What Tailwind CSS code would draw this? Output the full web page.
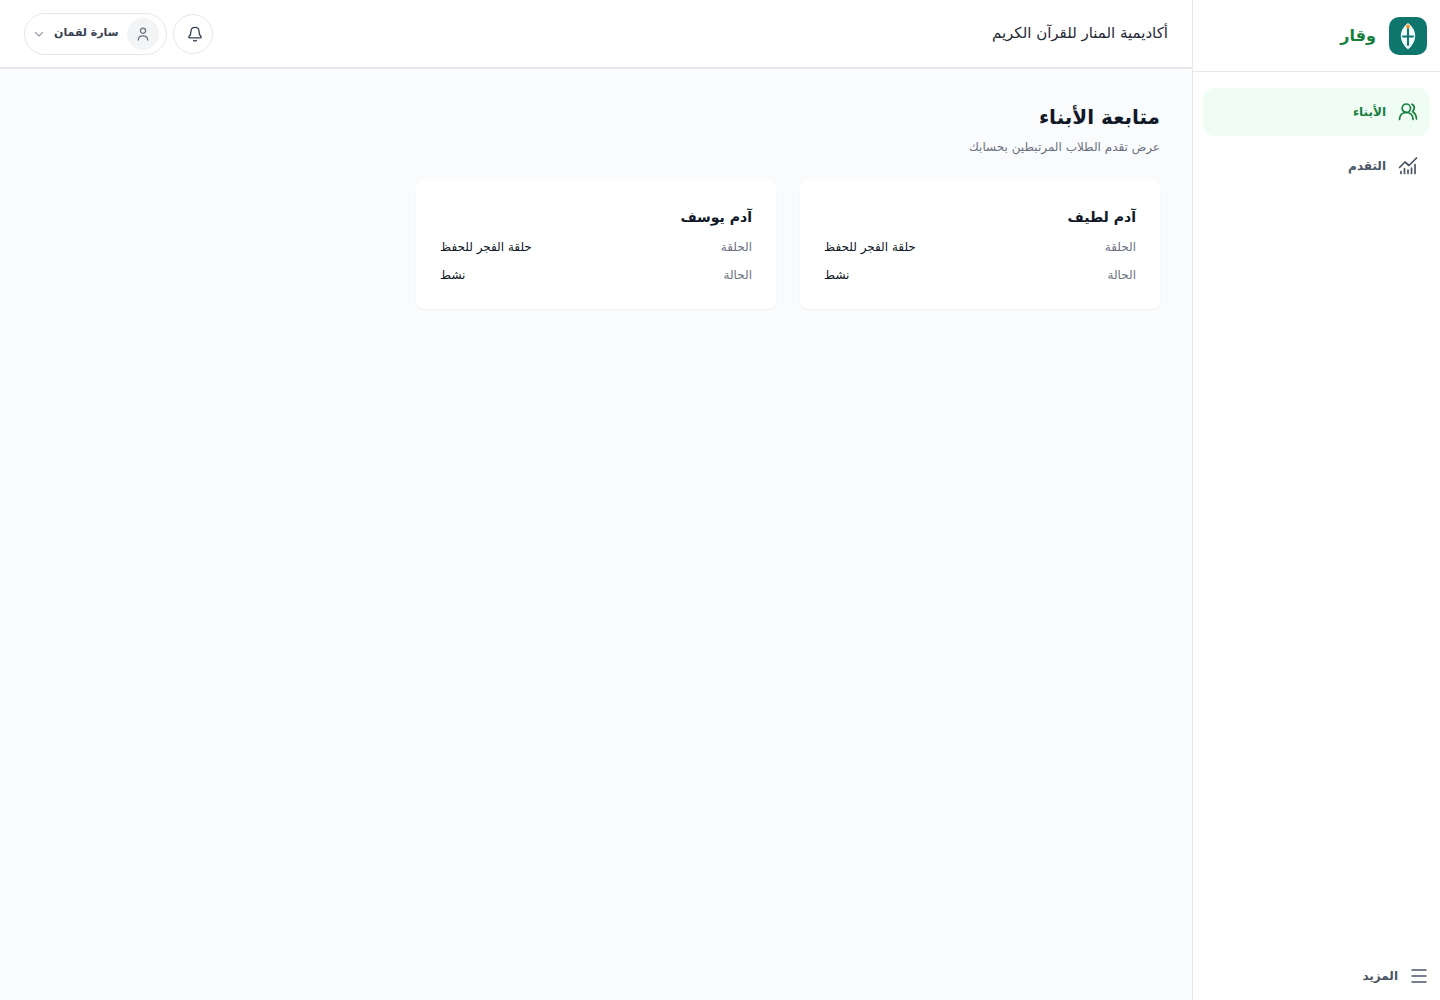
<!DOCTYPE html>
<html lang="ar" dir="rtl">
<head>
    <meta charset="UTF-8">
    <meta name="viewport" content="width=device-width, initial-scale=1.0">
    <title>متابعة الأبناء | وقار</title>
    <script src="https://cdn.jsdelivr.net/npm/@tailwindcss/browser@4"></script>
</head>
<body class="flex min-h-screen bg-[#fafbfd] font-['DejaVu_Sans',sans-serif] text-[#111827]">
    <!-- Sidebar -->
    <aside class="flex w-62 shrink-0 flex-col border-l border-gray-200 bg-white">
        <a href="#" class="flex h-18 items-center gap-3 border-b border-gray-200 px-3">
            <svg class="size-10" viewBox="0 0 40 40" fill="none">
                <rect x="1" y="1" width="38" height="38" rx="10" fill="#0f766e" />
                <path d="M20 7c5 4 7.200 8.500 7.200 13S25 29 20 33.500C15 29 12.800 24.500 12.800 20S15 11 20 7Z" fill="#f0fdfa" />
                <path d="M20 12v17M15 20.500h10" stroke="#0f766e" stroke-width="2" stroke-linecap="round" />
                <circle cx="20" cy="10.500" r="1.900" fill="#f59432" />
            </svg>
            <span class="text-base font-bold text-[#15803d]">وقار</span>
        </a>
        <nav class="flex grow flex-col gap-1.5 px-2.5 pt-4">
            <a href="#" class="flex h-12 items-center gap-3 rounded-xl bg-[#f0fdf4] px-3 text-xs font-bold text-[#15803d]">
                <svg class="size-5" viewBox="0 0 20 20" fill="none" stroke="currentColor" stroke-width="1.700" stroke-linecap="round" stroke-linejoin="round">
                    <circle cx="8.300" cy="6.200" r="4.200" />
                    <path d="M1.500 17.500c.2-4.500 3-7 6.800-7s6.600 2.500 6.800 7" />
                    <path d="M14 2.200c1.800 1 2.600 2.600 2.200 4.300-.2 1.300-.9 2.200-1.700 3 2.400 1.500 3.800 4 4 7.500" />
                </svg>
                الأبناء
            </a>
            <a href="#" class="flex h-12 items-center gap-3 rounded-xl px-3 text-xs font-bold text-gray-600">
                <svg class="size-5" viewBox="0 0 20 20" fill="none" stroke="currentColor" stroke-width="1.700" stroke-linecap="round" stroke-linejoin="round">
                    <path d="M1.500 11.500 7 6l4 3.500 7.500-7.500" />
                    <path d="M3 15.500v2M6.500 12.500v5M10 14v3.500M13.500 12v5.500M17 8.500v9" />
                </svg>
                التقدم
            </a>
        </nav>
        <button type="button" class="flex h-12 items-center gap-3 px-3 text-xs font-bold text-gray-600">
            <svg class="size-[18px]" viewBox="0 0 18 18" fill="none" stroke="currentColor" stroke-width="1.500" stroke-linecap="round">
                <path d="M2 3h14M2 9h14M2 15h14" />
            </svg>
            المزيد
        </button>
    </aside>

    <div class="flex min-w-0 grow flex-col">
        <header class="flex h-[69px] items-center justify-between border-b-2 border-gray-200 bg-white px-6">
            <p class="text-[15px] text-[#1f2937]">أكاديمية المنار للقرآن الكريم</p>
            <div class="flex items-center gap-1.5">
                <button type="button" aria-label="الإشعارات" class="flex size-10 items-center justify-center rounded-full border border-gray-200 pl-1 text-gray-700">
                    <svg class="size-4" viewBox="0 0 18 18" fill="none" stroke="currentColor" stroke-width="1.500" stroke-linecap="round" stroke-linejoin="round">
                        <path d="M9 1.500c-2.700 0-4.500 2-4.500 4.500 0 3.700-1.200 5-2.300 6-.4.500-.1 1.300.6 1.300h12.400c.7 0 1-.8.600-1.300-1.100-1-2.300-2.300-2.300-6 0-2.500-1.800-4.500-4.500-4.500Z" />
                        <path d="M7.500 16.200c.8.700 2.200.7 3 0" />
                    </svg>
                </button>
                <button type="button" class="flex h-[42px] items-center gap-2 rounded-full border border-gray-200 px-[7px] text-[11px] font-bold text-[#374151]">
                    <span class="flex size-8 items-center justify-center rounded-full bg-gray-100 text-gray-500">
                        <svg class="size-3.5" viewBox="0 0 14 14" fill="none" stroke="currentColor" stroke-width="1.300" stroke-linecap="round">
                            <circle cx="7" cy="3.800" r="2.600" />
                            <path d="M2.300 13c0-2.500 1.700-4.200 4.700-4.200s4.700 1.700 4.700 4.200" />
                        </svg>
                    </span>
                    سارة لقمان
                    <svg class="size-3.5" viewBox="0 0 14 14" fill="none" stroke="#9ca3af" stroke-width="1.300" stroke-linecap="round" stroke-linejoin="round">
                        <path d="m3.500 5.500 3.500 3.500 3.500-3.500" />
                    </svg>
                </button>
            </div>
        </header>

        <main class="p-8">
            <h1 class="text-xl leading-8 font-bold">متابعة الأبناء</h1>
            <p class="mt-1 text-xs leading-5 text-gray-500">عرض تقدم الطلاب المرتبطين بحسابك</p>

            <section class="mt-6 grid grid-cols-3 gap-6">
                <article class="rounded-lg bg-white p-6 shadow-xs">
                    <h2 class="text-sm leading-6 font-bold">آدم لطيف</h2>
                    <dl class="mt-2 flex flex-col gap-2 text-xs leading-5">
                        <div class="flex justify-between"><dt class="text-gray-500">الحلقة</dt><dd>حلقة الفجر للحفظ</dd></div>
                        <div class="flex justify-between"><dt class="text-gray-500">الحالة</dt><dd>نشط</dd></div>
                    </dl>
                </article>
                <article class="rounded-lg bg-white p-6 shadow-xs">
                    <h2 class="text-sm leading-6 font-bold">آدم يوسف</h2>
                    <dl class="mt-2 flex flex-col gap-2 text-xs leading-5">
                        <div class="flex justify-between"><dt class="text-gray-500">الحلقة</dt><dd>حلقة الفجر للحفظ</dd></div>
                        <div class="flex justify-between"><dt class="text-gray-500">الحالة</dt><dd>نشط</dd></div>
                    </dl>
                </article>
            </section>
        </main>
    </div>
</body>
</html>
